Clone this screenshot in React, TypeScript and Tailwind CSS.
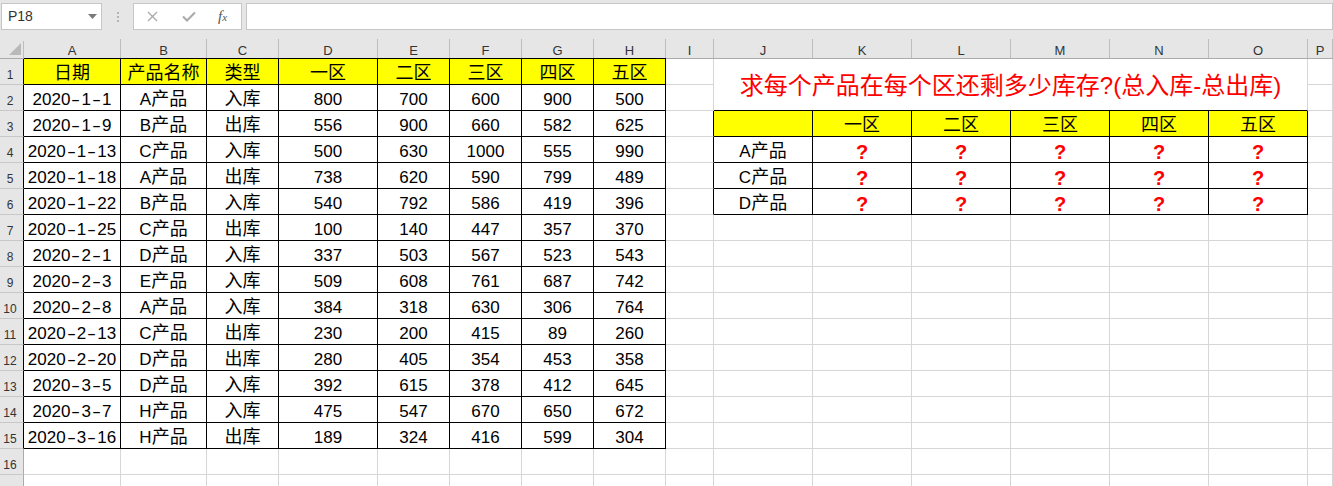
import React from 'react';

const COLS = ['A', 'B', 'C', 'D', 'E', 'F', 'G', 'H', 'I', 'J', 'K', 'L', 'M', 'N', 'O', 'P'];

const HEAD = ['日期', '产品名称', '类型', '一区', '二区', '三区', '四区', '五区'];

const DATA: string[][] = [
  ['2020-1-1', 'A产品', '入库', '800', '700', '600', '900', '500'],
  ['2020-1-9', 'B产品', '出库', '556', '900', '660', '582', '625'],
  ['2020-1-13', 'C产品', '入库', '500', '630', '1000', '555', '990'],
  ['2020-1-18', 'A产品', '出库', '738', '620', '590', '799', '489'],
  ['2020-1-22', 'B产品', '入库', '540', '792', '586', '419', '396'],
  ['2020-1-25', 'C产品', '出库', '100', '140', '447', '357', '370'],
  ['2020-2-1', 'D产品', '入库', '337', '503', '567', '523', '543'],
  ['2020-2-3', 'E产品', '入库', '509', '608', '761', '687', '742'],
  ['2020-2-8', 'A产品', '入库', '384', '318', '630', '306', '764'],
  ['2020-2-13', 'C产品', '出库', '230', '200', '415', '89', '260'],
  ['2020-2-20', 'D产品', '出库', '280', '405', '354', '453', '358'],
  ['2020-3-5', 'D产品', '入库', '392', '615', '378', '412', '645'],
  ['2020-3-7', 'H产品', '入库', '475', '547', '670', '650', '672'],
  ['2020-3-16', 'H产品', '出库', '189', '324', '416', '599', '304'],
];

const ZONES = ['一区', '二区', '三区', '四区', '五区'];
const PRODUCTS = ['A产品', 'C产品', 'D产品'];

// CJK runs a touch larger than the latin digits, like the sheet font
const Txt = ({ s, date }: { s: string; date?: boolean }) => {
  const parts = s.split(/([\u4e00-\u9fff]+)/).filter(Boolean);
  return (
    <span className="whitespace-nowrap">
      {parts.map((p, i) =>
        /[\u4e00-\u9fff]/.test(p) ? (
          <span key={i} className="text-[18px]">{p}</span>
        ) : date ? (
          p.split('').map((ch, j) =>
            ch === '-' ? (
              <span key={`${i}-${j}`} className="inline-block w-[11px] scale-x-[1.6] text-center">-</span>
            ) : (
              <span key={`${i}-${j}`}>{ch}</span>
            )
          )
        ) : (
          <span key={i}>{p}</span>
        )
      )}
    </span>
  );
};

const Cell = ({
  black,
  yellow,
  children,
}: {
  black?: boolean;
  yellow?: boolean;
  children?: React.ReactNode;
}) => (
  <div
    className={`flex items-center justify-center overflow-hidden border-r border-b pt-[4px] text-[17px] leading-[20px] text-black ${
      black ? 'border-r-black border-b-black' : 'border-r-[#d6d6d6] border-b-[#d6d6d6]'
    } ${yellow ? 'bg-[#ffff00]' : 'bg-white'}`}
  >
    {children}
  </div>
);

const RowHead = ({ n, black }: { n?: number; black?: boolean }) => (
  <div
    className={`flex items-end justify-center border-r border-b border-b-[#c8c8c8] bg-[#e6e6e6] pr-[3px] pb-[2px] text-[12px] leading-[14px] text-[#333] ${
      black ? 'border-r-black' : 'border-r-[#ababab]'
    }`}
  >
    {n}
  </div>
);

const TopBar = () => (
  <div className="flex h-[31px] items-start bg-[#e6e6e6] pt-[3px]">
    <div className="ml-[1px] flex h-[27px] w-[101px] items-center justify-between border border-[#c6c6c6] bg-white pr-[4px] pl-[6px]">
      <span className="text-[14px] text-[#333]">P18</span>
      <svg width="9" height="5" viewBox="0 0 9 5">
        <path d="M0 0H9L4.5 5Z" fill="#7a7a7a" />
      </svg>
    </div>
    <div className="flex w-[31px] flex-col items-center gap-[2px] pt-[9px]">
      <div className="h-[2px] w-[2px] bg-[#b4b4b4]" />
      <div className="h-[2px] w-[2px] bg-[#b4b4b4]" />
      <div className="h-[2px] w-[2px] bg-[#b4b4b4]" />
    </div>
    <div className="flex h-[27px] w-[109px] items-center border border-[#c6c6c6] bg-white pl-[13px]">
      <svg width="11" height="11" viewBox="0 0 11 11">
        <path d="M1 1L10 10M10 1L1 10" stroke="#a9a9a9" strokeWidth="1.3" />
      </svg>
      <svg className="ml-[24px]" width="14" height="11" viewBox="0 0 14 11">
        <path d="M1 5.5L5 9.5L13 1.5" stroke="#a9a9a9" strokeWidth="2" fill="none" />
      </svg>
      <span className="ml-[22px] font-['Liberation_Serif',serif] text-[15px] text-[#555] italic">
        f<span className="text-[11px]">x</span>
      </span>
    </div>
    <div className="ml-[4px] h-[27px] flex-1 border border-[#c6c6c6] bg-white" />
  </div>
);

export default function App() {
  const rows: React.ReactNode[] = [];

  // column header strip
  rows.push(
    <div key="corner" className="flex flex-col border-b border-b-[#ababab] bg-[#e6e6e6]">
      <div className="h-[10px]" />
      <div className="flex flex-1 items-end justify-end border-r border-r-[#bdbdbd] pr-[2px] pb-[3px]">
        <svg width="12" height="12" viewBox="0 0 12 12">
          <path d="M12 0V12H0Z" fill="#b9b9b9" />
        </svg>
      </div>
    </div>
  );
  COLS.forEach((c, i) =>
    rows.push(
      <div
        key={`h-${c}`}
        className={`flex flex-col border-b bg-[#e6e6e6] ${i < 8 ? 'border-b-black' : 'border-b-[#ababab]'}`}
      >
        <div className="h-[10px]" />
        <div className="flex-1 border-r border-r-[#bdbdbd] pt-[5px] text-center text-[13px] leading-[14px] text-[#333]">
          {c}
        </div>
      </div>
    )
  );

  for (let r = 1; r <= 17; r++) {
    rows.push(<RowHead key={`r${r}`} n={r <= 16 ? r : undefined} black={r <= 15} />);
    for (let c = 0; c < 16; c++) {
      const key = `${r}-${c}`;
      if (c < 8) {
        if (r === 1) {
          rows.push(
            <Cell key={key} black yellow>
              <Txt s={HEAD[c]} />
            </Cell>
          );
        } else if (r <= 15) {
          rows.push(
            <Cell key={key} black>
              <Txt s={DATA[r - 2][c]} date={c === 0} />
            </Cell>
          );
        } else {
          rows.push(<Cell key={key} />);
        }
      } else if (c === 8) {
        rows.push(
          <div
            key={key}
            className={`border-r border-b border-b-[#d6d6d6] bg-white ${
              r >= 3 && r <= 6 ? 'border-r-black' : 'border-r-[#d6d6d6]'
            }`}
          />
        );
      } else if (c >= 9 && c <= 14) {
        if (r === 1 && c === 9) {
          rows.push(
            <div
              key="title"
              className="col-span-6 row-span-2 flex items-center justify-center border-r border-b border-r-[#d6d6d6] border-b-black bg-white pt-[2px] text-[24px] leading-[30px] text-[#ff0000]"
            >
              求每个产品在每个区还剩多少库存?(总入库-总出库)
            </div>
          );
        } else if (r <= 2) {
          // covered by the merged title
        } else if (r === 3) {
          rows.push(
            <Cell key={key} black yellow>
              {c > 9 ? <Txt s={ZONES[c - 10]} /> : null}
            </Cell>
          );
        } else if (r <= 6) {
          rows.push(
            <Cell key={key} black>
              {c === 9 ? (
                <Txt s={PRODUCTS[r - 4]} />
              ) : (
                <span className="text-[20px] font-bold text-[#ff0000]">?</span>
              )}
            </Cell>
          );
        } else {
          rows.push(<Cell key={key} />);
        }
      } else {
        rows.push(<Cell key={key} />);
      }
    }
  }

  return (
    <div className="h-[486px] w-[1333px] overflow-hidden bg-white font-['Liberation_Sans','Noto_Sans_CJK_SC',sans-serif]">
      <TopBar />
      <div className="grid grid-cols-[24px_97px_86px_72px_99px_72px_72px_72px_72px_48px_99px_99px_99px_99px_99px_99px_1fr] grid-rows-[28px_repeat(17,26px)]">
        {rows}
      </div>
    </div>
  );
}
